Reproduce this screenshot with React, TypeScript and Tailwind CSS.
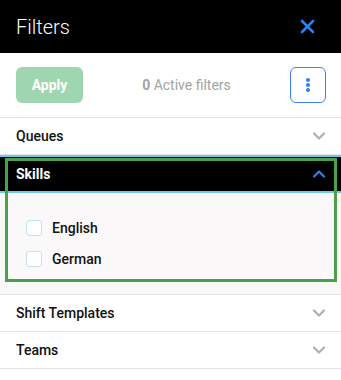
import React, { useState } from "react";

const Chevron = ({ up = false }: { up?: boolean }) => (
  <svg
    width="14"
    height="14"
    viewBox="0 0 14 14"
    fill="none"
    stroke={up ? "#2f80ed" : "#b0b0b0"}
    strokeWidth="2.2"
    strokeLinecap="round"
    strokeLinejoin="round"
  >
    {up ? <path d="M2 9.5 7 4.5l5 5" /> : <path d="M2 4.5 7 9.5l5-5" />}
  </svg>
);

const Row = ({ label }: { label: string }) => (
  <div className="flex h-[37px] items-center justify-between border-b border-[#e2e2e2] pl-4 pr-[15px]">
    <span className="text-[14px] font-medium text-[#111]">{label}</span>
    <Chevron />
  </div>
);

const App = () => {
  const [skills] = useState(["English", "German"]);

  return (
    <div
      className="relative h-[380px] w-[341px] overflow-hidden bg-white"
      style={{ fontFamily: "Roboto, 'Liberation Sans', sans-serif" }}
    >
      {/* header */}
      <div className="flex h-[53px] items-center justify-between bg-black pl-4 pr-[26px]">
        <span className="text-[20px] font-light text-white">Filters</span>
        <svg width="15" height="15" viewBox="0 0 15 15" stroke="#2f80ed" strokeWidth="2.6" strokeLinecap="round">
          <path d="M2 2l11 11M13 2 2 13" />
        </svg>
      </div>

      {/* toolbar */}
      <div className="flex h-[65px] items-center justify-between border-b border-[#e2e2e2] pl-4 pr-[15px]">
        <button className="h-9 w-[67px] rounded-md bg-[#9fd5b1] text-[14px] font-bold text-white">
          Apply
        </button>
        <span className="text-[14px] text-[#a3a3a3]">
          <span className="font-bold">0</span> Active filters
        </span>
        <button className="flex h-9 w-9 flex-col items-center justify-center gap-[1.5px] rounded-md border border-[#3b82f6]">
          <span className="h-[3.5px] w-[3.5px] rounded-full bg-[#2f80ed]" />
          <span className="h-[3.5px] w-[3.5px] rounded-full bg-[#2f80ed]" />
          <span className="h-[3.5px] w-[3.5px] rounded-full bg-[#2f80ed]" />
        </button>
      </div>

      <Row label="Queues" />

      {/* skills section (open) */}
      <div className="border-y-2 border-[#6cc8f0]">
        <div className="flex h-[34px] items-center justify-between bg-black pl-4 pr-[15px]">
          <span className="text-[14px] font-bold text-white">Skills</span>
          <Chevron up />
        </div>
      </div>
      <div className="flex flex-col gap-[11px] border-b border-[#e2e2e2] bg-[#faf8f8] pb-[25px] pl-[26px] pt-[25px]">
        {skills.map((s) => (
          <label key={s} className="flex h-5 items-center gap-[10px]">
            <span className="h-4 w-4 rounded-[3px] border border-[#c3e2f0] bg-white" />
            <span className="text-[14px] font-medium text-[#111]">{s}</span>
          </label>
        ))}
      </div>

      <Row label="Shift Templates" />
      <Row label="Teams" />

      {/* highlight outline over the skills section */}
      <div className="pointer-events-none absolute left-[5px] top-[158px] h-[124px] w-[332px] border-[3px] border-[#4ca04a]" />
    </div>
  );
};

export default App;
